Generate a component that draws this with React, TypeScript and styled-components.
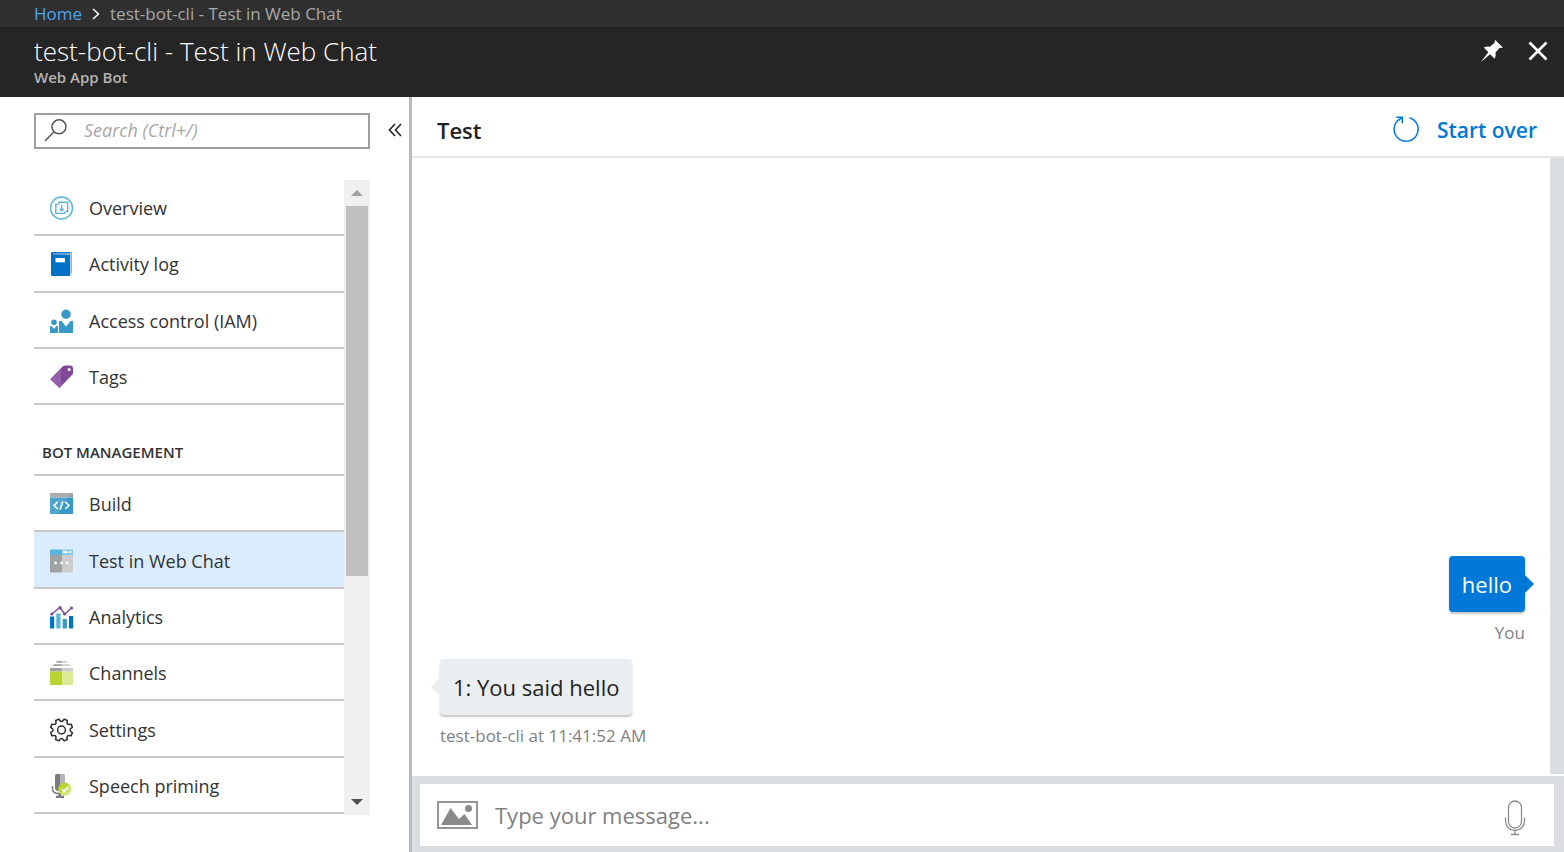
import React from "react";
import styled, { createGlobalStyle, css } from "styled-components";

const GlobalStyle = createGlobalStyle`
  *, *::before, *::after { box-sizing: border-box; }
  body {
    margin: 0;
    background: #fff;
    color: #333;
    font-family: "Open Sans", "Noto Sans", sans-serif;
    font-size: 18px;
    line-height: 24px;
  }
  button, input { font: inherit; color: inherit; }
  button { border: 0; padding: 0; background: none; cursor: pointer; }
  svg { display: block; flex: none; }
`;

const Page = styled.div`
  display: flex;
  flex-direction: column;
  min-height: 100vh;
`;

const Breadcrumb = styled.nav`
  display: flex;
  align-items: center;
  gap: 10px;
  height: 27px;
  padding-left: 34px;
  background: #303030;
  color: #a8a8a8;
  font-size: 17px;
`;

const HomeLink = styled.a`
  color: #4ca3ec;
  text-decoration: none;
`;

const TitleBar = styled.header`
  display: flex;
  justify-content: space-between;
  align-items: flex-start;
  height: 70px;
  padding: 8px 16px 0 34px;
  background: #252525;
`;

const Title = styled.h1`
  margin: 0;
  color: #fff;
  font-size: 26px;
  font-weight: 300;
  line-height: 32px;
`;

const Subtitle = styled.p`
  margin: 0;
  color: #b4b4b4;
  font-size: 15px;
  font-weight: 600;
  line-height: 20px;
`;

const WindowActions = styled.div`
  display: flex;
  align-items: center;
  gap: 24px;
  height: 32px;
`;

const Body = styled.div`
  display: flex;
  flex: 1;
`;

const Sidebar = styled.aside`
  display: flex;
  flex-direction: column;
  flex: none;
  width: 412px;
  padding: 16px 3px 0 34px;
  border-right: 3px solid #bababa;
`;

const SearchRow = styled.div`
  display: flex;
  align-items: center;
  justify-content: space-between;
`;

const SearchBox = styled.label`
  display: flex;
  align-items: center;
  gap: 16px;
  width: 336px;
  height: 36px;
  padding: 0 8px 2px;
  border: 2px solid #a0a0a0;
`;

const SearchInput = styled.input`
  flex: 1;
  min-width: 0;
  height: 30px;
  padding: 0;
  border: 0;
  outline: 0;
  background: none;
  font-style: italic;
  &::placeholder { color: #a8a8a8; opacity: 1; }
`;

const CollapseButton = styled.button`
  padding: 3px 4px 5px;
`;

const MenuArea = styled.div`
  display: flex;
  width: 336px;
  height: 635px;
  margin-top: 31px;
`;

const Menu = styled.nav`
  display: flex;
  flex: 1;
  flex-direction: column;
  padding-bottom: 1px;
  overflow: hidden;
`;

const MenuItem = styled.a<{ $active?: boolean }>`
  display: flex;
  flex: 1;
  align-items: center;
  gap: 15px;
  padding-left: 16px;
  padding-top: 2px;
  border-bottom: 2px solid #c8c8c8;
  color: #333;
  text-decoration: none;
  ${(p) => p.$active && css`background: #daecfd;`}
`;

const MenuHeading = styled.h2`
  display: flex;
  align-items: flex-end;
  height: 71px;
  margin: 0;
  padding: 0 8px 10px;
  border-bottom: 2px solid #c8c8c8;
  color: #333;
  font-size: 15px;
  font-weight: 600;
`;

const Scrollbar = styled.div`
  display: flex;
  flex-direction: column;
  width: 26px;
  background: #f0f0f0;
`;

const ScrollButton = styled.button`
  display: flex;
  align-items: center;
  justify-content: center;
  height: 26px;
`;

const ScrollTrack = styled.div`
  flex: 1;
  padding: 0 2px;
`;

const ScrollThumb = styled.div`
  height: 370px;
  background: #c1c1c1;
`;

const Chat = styled.main`
  display: flex;
  flex: 1;
  flex-direction: column;
  min-width: 0;
`;

const ChatHeader = styled.div`
  display: flex;
  align-items: center;
  justify-content: space-between;
  height: 61px;
  padding: 6px 27px 0 25px;
  border-bottom: 2px solid #e5e6e7;
`;

const ChatTitle = styled.h2`
  margin: 0;
  color: #222;
  font-size: 22px;
  font-weight: 600;
`;

const StartOver = styled.button`
  display: flex;
  align-items: center;
  gap: 18px;
  color: #0078d7;
  font-size: 21px;
  font-weight: 600;
  svg { margin-bottom: 2px; }
`;

const Transcript = styled.section`
  display: flex;
  flex: 1;
  flex-direction: column;
  justify-content: flex-end;
  margin-bottom: 2px;
  padding: 0 25px 26px 28px;
  border-right: 14px solid #dadee1;
`;

const Message = styled.div<{ $mine?: boolean }>`
  display: flex;
  flex-direction: column;
  align-items: ${(p) => (p.$mine ? "flex-end" : "flex-start")};
  margin-top: 14px;
`;

const Bubble = styled.p<{ $mine?: boolean }>`
  position: relative;
  margin: 0;
  padding: 14px 13px;
  border-radius: 4px;
  box-shadow: 0 2px 2px rgba(0, 0, 0, 0.22);
  background: ${(p) => (p.$mine ? "#0078d7" : "#eaeef1")};
  color: ${(p) => (p.$mine ? "#fff" : "#222")};
  font-size: 22px;
  line-height: 28px;
  &::after {
    content: "";
    position: absolute;
    top: 19px;
    border: 9px solid transparent;
    ${(p) =>
      p.$mine
        ? css`left: 100%; border-right: 0; border-left-color: #0078d7;`
        : css`right: 100%; border-left: 0; border-right-color: #eaeef1;`}
  }
`;

const MessageMeta = styled.span`
  padding: 9px 0 0;
  color: #7f7f7f;
  font-size: 17px;
`;

const Composer = styled.form`
  display: flex;
  align-items: center;
  height: 76px;
  padding: 0 28px 0 17px;
  border: solid #dadee1;
  border-width: 8px 10px 6px 8px;
`;

const MessageInput = styled.input`
  flex: 1;
  min-width: 0;
  height: 40px;
  padding: 0 17px;
  border: 0;
  outline: 0;
  font-size: 22px;
  line-height: 32px;
  &::placeholder { color: #7f7f7f; opacity: 1; }
`;

const MicButton = styled.button`
  padding-top: 6px;
`;

const OverviewIcon = () => (
  <svg width="24" height="24" viewBox="0 0 24 24" fill="none" stroke="#59b4d9" aria-hidden="true">
    <circle cx="11.500" cy="12" r="11" strokeWidth="1.5" />
    <path d="M9 8.200V6.300h8.700v9.200h-2.400M8 8.500H5.800v8.900h8.800v-1.700" strokeWidth="1.400" />
    <path d="M11.700 9v5.800M9.800 12.700l1.900 2.100 1.900-2.100" strokeWidth="1.300" />
  </svg>
);

const LogIcon = () => (
  <svg width="24" height="24" viewBox="0 0 24 24" aria-hidden="true">
    <path d="M3 0h19v21l-2 2V2.500H2z" fill="#7fa7c9" />
    <path d="M3 1.200h17.800V22" fill="none" stroke="#dfe9f2" strokeWidth=".8" />
    <path d="M2.200 0H20v1.700H3.500L20 2.500V24H2.300Q1 24 1 22.500V1.300Q1 0 2.200 0z" fill="#0072c6" />
    <path d="M3 2h17" stroke="#cfe0f0" strokeWidth=".7" />
    <path d="M5.500 6h9.500v4.300H5.500z" fill="#fff" />
  </svg>
);

const AccessIcon = () => (
  <svg width="24" height="24" viewBox="0 0 24 24" fill="#3999c6" aria-hidden="true">
    <circle cx="16" cy="5.300" r="4.700" />
    <circle cx="4" cy="13.300" r="2.800" />
    <path d="M9 12h2.500l4.500 5.500 4.500-5.500H23v12H9zM0 17h1.500L4 20l2.500-3H8v7H0z" />
  </svg>
);

const TagIcon = () => (
  <svg width="24" height="24" viewBox="0 0 24 24" aria-hidden="true">
    <path d="M13.200 1.100Q14 .5 15 .5h5.500Q23 .6 23 3v5Q23 9 22.200 9.800L9.500 23 .3 14.200z" fill="#804998" />
    <path d="M13.200 1.100L11 3.200V21.500L9.500 23 .3 14.200z" fill="#9560ab" />
    <circle cx="19.200" cy="4.500" r="1.500" fill="#fff" />
  </svg>
);

const BuildIcon = () => (
  <svg width="24" height="24" viewBox="0 0 24 24" aria-hidden="true">
    <path d="M0 1h23v4.500H0z" fill="#a0a1a2" />
    <path d="M0 5.500h23V22H0z" fill="#3999c6" />
    <path d="M18.500 5.500H0V22h7.500zM21.500 1H0v4.500h18.500z" fill="#fff" opacity=".12" />
    <path d="M7.800 9.800L4 13.400l3.800 3.600M15.200 9.800l3.800 3.600-3.800 3.600M12.800 9.200L10.200 17.700" fill="none" stroke="#fff" strokeWidth="1.500" />
  </svg>
);

const WebChatIcon = () => (
  <svg width="24" height="24" viewBox="0 0 24 24" aria-hidden="true">
    <path d="M0 .5h12V6H0z" fill="#59b4d9" />
    <path d="M12 .5h11V6H12z" fill="#8bcbe6" />
    <path d="M0 6h12v17.500H0z" fill="#a0a1a2" />
    <path d="M12 6h11v17.500H12z" fill="#cccecd" />
    <path d="M13.200 2.300h4.300V4h-4.300zM19 2.300h2.300V4H19z" fill="#fff" />
    <g fill="#fff">
      <circle cx="5.600" cy="14" r="1.400" />
      <circle cx="11.500" cy="14" r="1.400" />
      <circle cx="17.400" cy="14" r="1.400" />
    </g>
  </svg>
);

const AnalyticsIcon = () => (
  <svg width="24" height="24" viewBox="0 0 24 24" aria-hidden="true">
    <path d="M0 11.500h4.200v12H0zM19 11h4.200v12.500H19z" fill="#0072c6" />
    <path d="M6.300 8.500h4.200v15H6.300z" fill="#59b4d9" />
    <path d="M12.700 14h4.200v9.500h-4.200z" fill="#3999c6" />
    <path d="M1.800 9L10 2.500l4.700 6.700L21.500 3" fill="none" stroke="#804998" strokeWidth="1.400" />
    <g fill="#804998">
      <circle cx="1.800" cy="9" r="1.600" />
      <circle cx="10" cy="2.700" r="1.700" />
      <circle cx="14.600" cy="9" r="1.600" />
      <circle cx="21.500" cy="3" r="1.600" />
    </g>
  </svg>
);

const ChannelsIcon = () => (
  <svg width="24" height="24" viewBox="0 0 24 24" aria-hidden="true">
    <path d="M6.500 0H12v1.800H6.500zM3.300 3.300H12v1.800H3.300zM0 7h12v3.500H0z" fill="#a0a1a2" />
    <path d="M12 0h5v1.800h-5zM12 3.300h8v1.800h-8zM12 7h11v3.500H12z" fill="#cccecd" />
    <path d="M0 10.500h12V24H0z" fill="#b8d432" />
    <path d="M12 10.500h11V24H12z" fill="#dcea98" />
  </svg>
);

const SettingsIcon = () => (
  <svg width="24" height="24" viewBox="-11.500 -12 24 24" fill="none" stroke="#2b2b2b" strokeWidth="1.500" strokeLinejoin="round" aria-hidden="true">
    <circle r="3.900" />
    <path d="M2.610-10.890L5.850-9.550Q4.310-4.310 9.550-5.850L10.890-2.610Q6.100 0 10.890 2.610L9.550 5.850Q4.310 4.310 5.850 9.550L2.610 10.890Q0 6.100-2.610 10.890L-5.850 9.550Q-4.310 4.310-9.550 5.850L-10.890 2.610Q-6.100 0-10.890-2.610L-9.550-5.850Q-4.310-4.310-5.850-9.550L-2.610-10.890Q0-6.100 2.610-10.890z" />
  </svg>
);

const SpeechIcon = () => (
  <svg width="24" height="24" viewBox="0 0 24 24" aria-hidden="true">
    <path d="M2.500 12v2.500q0 5 6 5h2" fill="none" stroke="#7a7a7a" strokeWidth="1.500" />
    <path d="M6 21.800h8V24H6zM8.500 19h2.500v3H8.500z" fill="#7a7a7a" />
    <path d="M6.500 0H10v17H8.500Q5 17 5 13.500V1.500Q5 0 6.500 0z" fill="#7a7a7a" />
    <path d="M10 0h3.500Q15 0 15 1.500v12q0 3.500-3.500 3.500H10z" fill="#b3b4b5" />
    <circle cx="14.700" cy="15" r="6.500" fill="#b8d432" />
    <path d="M19.300 10.400a6.500 6.500 0 0 1-9.200 9.200z" fill="#d3e57c" />
    <path d="M11.800 15l2.200 2.300 3.800-4" fill="none" stroke="#fff" strokeWidth="1.500" />
  </svg>
);

const mainItems = [
  { label: "Overview", Icon: OverviewIcon },
  { label: "Activity log", Icon: LogIcon },
  { label: "Access control (IAM)", Icon: AccessIcon },
  { label: "Tags", Icon: TagIcon },
];

const botItems = [
  { label: "Build", Icon: BuildIcon },
  { label: "Test in Web Chat", Icon: WebChatIcon, active: true },
  { label: "Analytics", Icon: AnalyticsIcon },
  { label: "Channels", Icon: ChannelsIcon },
  { label: "Settings", Icon: SettingsIcon },
  { label: "Speech priming", Icon: SpeechIcon },
];

export default function App() {
  return (
    <Page>
      <GlobalStyle />
      <Breadcrumb aria-label="Breadcrumb">
        <HomeLink href="#home">Home</HomeLink>
        <svg width="8" height="12" viewBox="0 0 8 12" fill="none" stroke="#fff" strokeWidth="1.500" aria-hidden="true">
          <path d="M1 1l5.500 5L1 11" />
        </svg>
        <span>test-bot-cli - Test in Web Chat</span>
      </Breadcrumb>
      <TitleBar>
        <div>
          <Title>test-bot-cli - Test in Web Chat</Title>
          <Subtitle>Web App Bot</Subtitle>
        </div>
        <WindowActions>
          <button type="button" aria-label="Pin to dashboard">
            <svg width="24" height="24" viewBox="0 0 24 24" fill="#fff" aria-hidden="true">
              <path d="M15.300 1l7.500 7.500-1.500.5-1.500-.2-4.300 4.700q.8 3.300-.9 6.200l-4.500-4.500L1 23l7.300-9.800-4.500-4.600q3-1.500 6.200-.8l4.800-4.300-.3-1.300z" />
            </svg>
          </button>
          <button type="button" aria-label="Close">
            <svg width="20" height="20" viewBox="0 0 20 20" fill="none" stroke="#fff" strokeWidth="2.600" aria-hidden="true">
              <path d="M1.500 1.500l17 17M18.500 1.500l-17 17" />
            </svg>
          </button>
        </WindowActions>
      </TitleBar>
      <Body>
        <Sidebar>
          <SearchRow>
            <SearchBox>
              <svg width="24" height="24" viewBox="0 0 24 24" fill="none" stroke="#555" strokeWidth="1.500" aria-hidden="true">
                <circle cx="15" cy="8.800" r="7" />
                <path d="M10 13.800L1 23" />
              </svg>
              <SearchInput type="text" aria-label="Search" placeholder="Search (Ctrl+/)" />
            </SearchBox>
            <CollapseButton type="button" aria-label="Collapse menu">
              <svg width="14" height="14" viewBox="0 0 14 14" fill="none" stroke="#222" strokeWidth="1.600" aria-hidden="true">
                <path d="M7 1L1.500 7 7 13M13 1L7.500 7 13 13" />
              </svg>
            </CollapseButton>
          </SearchRow>
          <MenuArea>
            <Menu aria-label="Resource menu">
              {mainItems.map(({ label, Icon }) => (
                <MenuItem key={label} href="#menu">
                  <Icon />
                  {label}
                </MenuItem>
              ))}
              <MenuHeading>BOT MANAGEMENT</MenuHeading>
              {botItems.map(({ label, Icon, active }) => (
                <MenuItem key={label} href="#menu" $active={active}>
                  <Icon />
                  {label}
                </MenuItem>
              ))}
            </Menu>
            <Scrollbar>
              <ScrollButton type="button" aria-label="Scroll up">
                <svg width="12" height="6" viewBox="0 0 12 6" fill="#a3a3a3" aria-hidden="true">
                  <path d="M6 0l6 6H0z" />
                </svg>
              </ScrollButton>
              <ScrollTrack>
                <ScrollThumb />
              </ScrollTrack>
              <ScrollButton type="button" aria-label="Scroll down">
                <svg width="12" height="6" viewBox="0 0 12 6" fill="#505050" aria-hidden="true">
                  <path d="M0 0h12L6 6z" />
                </svg>
              </ScrollButton>
            </Scrollbar>
          </MenuArea>
        </Sidebar>
        <Chat>
          <ChatHeader>
            <ChatTitle>Test</ChatTitle>
            <StartOver type="button">
              <svg width="26" height="26" viewBox="0 0 26 26" fill="none" stroke="#0078d7" strokeWidth="1.500" aria-hidden="true">
                <path d="M16.500 1.700a12 12 0 1 1-9.500 1.200M3.300 1.200h6v6M9.300 1.200L5.500 4.500" />
              </svg>
              Start over
            </StartOver>
          </ChatHeader>
          <Transcript aria-label="Conversation">
            <Message $mine>
              <Bubble $mine>hello</Bubble>
              <MessageMeta>You</MessageMeta>
            </Message>
            <Message>
              <Bubble>1: You said hello</Bubble>
              <MessageMeta>test-bot-cli at 11:41:52 AM</MessageMeta>
            </Message>
          </Transcript>
          <Composer>
            <button type="button" aria-label="Upload image">
              <svg width="41" height="28" viewBox="0 0 41 28" aria-hidden="true">
                <rect x="1" y="1" width="39" height="26" fill="none" stroke="#8a8a8a" strokeWidth="1.800" />
                <path d="M4 24L13.500 7l8.500 11 5.500-5L35 24z" fill="#8a8a8a" />
                <circle cx="31.500" cy="7.500" r="3.500" fill="#8a8a8a" />
              </svg>
            </button>
            <MessageInput type="text" aria-label="Message" placeholder="Type your message..." />
            <MicButton type="button" aria-label="Speak">
              <svg width="22" height="36" viewBox="0 0 22 36" fill="none" stroke="#8a8a8a" strokeWidth="1.300" aria-hidden="true">
                <rect x="4.500" y="1" width="13" height="27" rx="6.500" />
                <path d="M1.500 17.500V21a9.500 9.500 0 0 0 19 0v-3.500M11 30.500V34M7 34.500h8" />
              </svg>
            </MicButton>
          </Composer>
        </Chat>
      </Body>
    </Page>
  );
}
